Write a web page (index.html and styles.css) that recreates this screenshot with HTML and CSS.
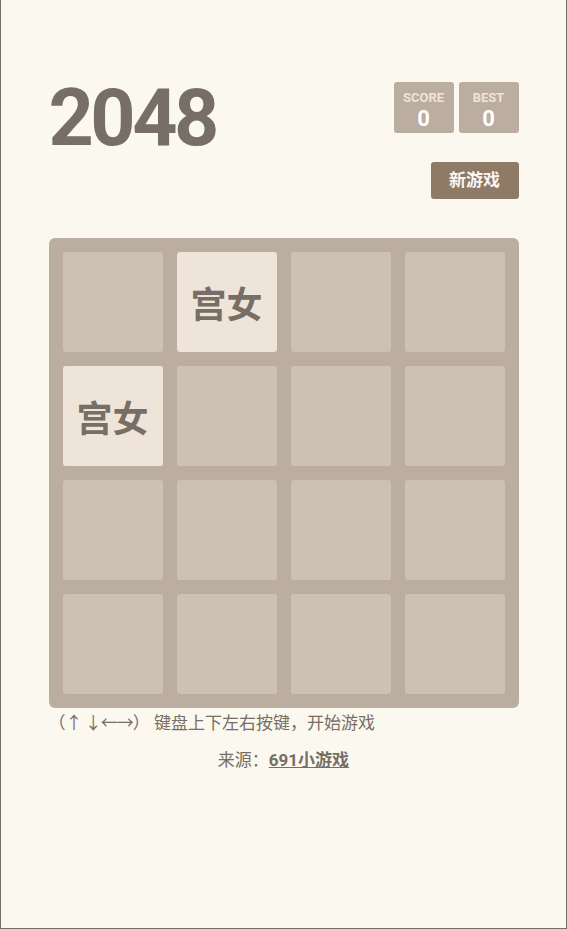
FILE: index.html
```html
<!DOCTYPE html>
<html lang="zh-CN">
<head>
<meta charset="utf-8">
<title>2048</title>
<link rel="stylesheet" href="styles.css">
</head>
<body>
<div class="frame">
  <div class="container">
    <div class="header">
      <h1 class="title">2048</h1>
      <div class="controls">
        <div class="scores">
          <div class="score-box">
            <div class="score-label">SCORE</div>
            <div class="score-value">0</div>
          </div>
          <div class="score-box">
            <div class="score-label">BEST</div>
            <div class="score-value">0</div>
          </div>
        </div>
        <a class="new-game">新游戏</a>
      </div>
    </div>
    <div class="board">
      <div class="cell"></div>
      <div class="cell tile">宫女</div>
      <div class="cell"></div>
      <div class="cell"></div>
      <div class="cell tile">宫女</div>
      <div class="cell"></div>
      <div class="cell"></div>
      <div class="cell"></div>
      <div class="cell"></div>
      <div class="cell"></div>
      <div class="cell"></div>
      <div class="cell"></div>
      <div class="cell"></div>
      <div class="cell"></div>
      <div class="cell"></div>
      <div class="cell"></div>
    </div>
    <p class="hint">（<span class="arrows">↑ ↓←→</span>） 键盘上下左右按键，开始游戏</p>
    <p class="source">来源：<a class="source-link">691小游戏</a></p>
  </div>
</div>
</body>
</html>
```

FILE: styles.css
```css
html, body {
  margin: 0;
  padding: 0;
  background: #faf8ef;
}
body {
  font-family: Roboto, "Noto Sans CJK SC", sans-serif;
  color: #776e65;
}
.frame {
  box-sizing: border-box;
  min-height: 929px;
  border: 1px solid #6f6f6f;
  border-top: none;
}
.container {
  width: 470px;
  margin: 0 auto;
  padding-top: 78px;
}
.header {
  display: flex;
  justify-content: space-between;
  align-items: flex-start;
}
.title {
  margin: 0;
  font-size: 79px;
  line-height: 80px;
  font-weight: 700;
  letter-spacing: -3.5px;
  color: #776e65;
}
.controls {
  display: flex;
  flex-direction: column;
  align-items: flex-end;
  padding-top: 4px;
}
.scores {
  display: flex;
  gap: 5px;
}
.score-box {
  box-sizing: border-box;
  width: 60px;
  height: 51px;
  padding-top: 8px;
  background: #bbada0;
  border-radius: 3px;
  text-align: center;
}
.score-label {
  font-size: 13px;
  line-height: 15px;
  font-weight: 700;
  color: #eee4da;
}
.score-value {
  margin-top: 1px;
  font-size: 22px;
  line-height: 25px;
  font-weight: 700;
  color: #ffffff;
}
.new-game {
  display: block;
  margin-top: 29px;
  width: 88px;
  height: 37px;
  line-height: 37px;
  background: #8f7a66;
  border-radius: 3px;
  color: #f9f6f2;
  font-size: 17px;
  font-weight: 700;
  text-align: center;
}
.board {
  margin-top: 39px;
  box-sizing: border-box;
  width: 470px;
  padding: 14px;
  background: #bbada0;
  border-radius: 6px;
  display: grid;
  grid-template-columns: repeat(4, 1fr);
  gap: 14px;
}
.cell {
  height: 100px;
  border-radius: 3px;
  background: #cdc1b4;
  display: flex;
  align-items: center;
  justify-content: center;
}
.tile {
  background: #eee4da;
  color: #776e65;
  font-size: 36px;
  font-weight: 700;
}
.hint {
  margin: 3px 0 0;
  font-size: 17px;
  line-height: 24px;
  color: #776e65;
}
.arrows {
  letter-spacing: -1px;
}
.source {
  margin: 13px 0 0;
  font-size: 17px;
  line-height: 24px;
  text-align: center;
  color: #776e65;
}
.source-link {
  font-weight: 700;
  text-decoration: underline;
  color: #776e65;
}
```
